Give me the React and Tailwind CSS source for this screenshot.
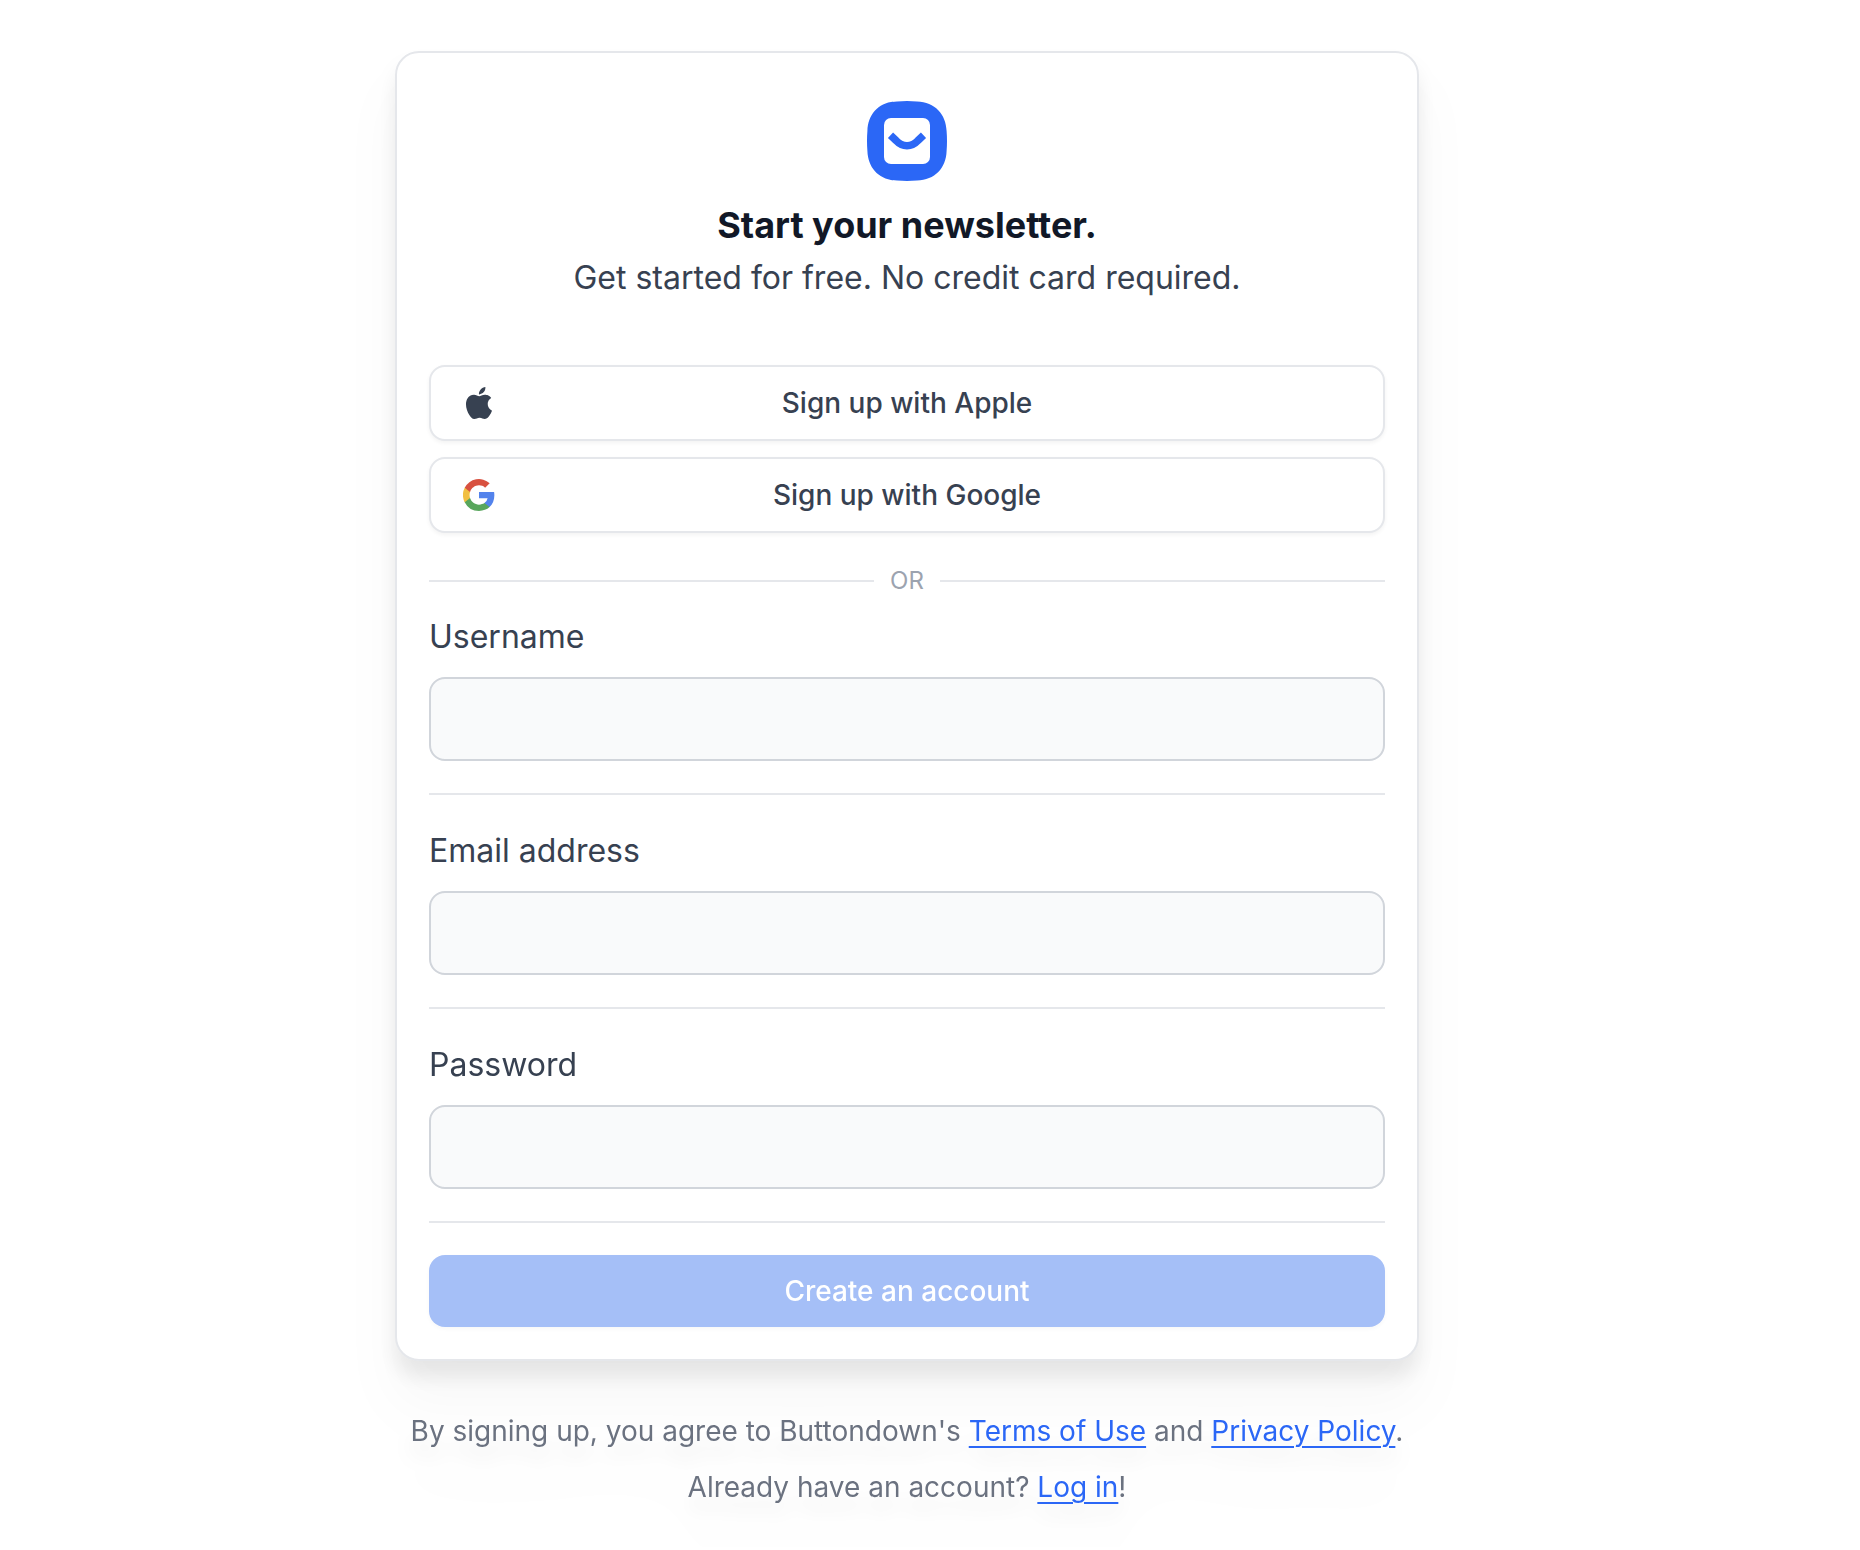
import React from "react";
import { SiApple } from "react-icons/si";

function Logo() {
  return (
    <svg viewBox="0 0 80 80" className="size-20" aria-label="Buttondown" role="img">
      <path
        fill="#2b67f6"
        d="M30 0.400Q40 -0.400 50 0.400C68 1 79 13 79.600 30Q80.400 40 79.600 50C79 67 68 79 50 79.600Q40 80.400 30 79.600C12 79 1 67 0.400 50Q-0.400 40 0.400 30C1 13 12 1 30 0.400Z"
      />
      <rect x="17" y="17" width="46" height="46" rx="7" fill="#fff" />
      <path
        d="M23.500 34.300L29 39.500C35.500 46.500 44.500 46.500 51 39.500L56.500 34.300"
        fill="none"
        stroke="#2b67f6"
        strokeWidth="7.500"
      />
    </svg>
  );
}

function GoogleIcon() {
  return (
    <svg viewBox="0 0 18 18" className="size-8" aria-hidden="true">
      <path fill="#5383ec" d="M17.640 9.200c0-.64-.06-1.250-.16-1.840H9v3.480h4.840a4.140 4.140 0 0 1-1.800 2.720v2.260h2.920c1.700-1.570 2.680-3.880 2.680-6.620z" />
      <path fill="#58a65c" d="M9 18c2.430 0 4.470-.8 5.960-2.180l-2.920-2.260c-.8.540-1.840.86-3.040.86-2.340 0-4.330-1.580-5.040-3.710H.96v2.330A9 9 0 0 0 9 18z" />
      <path fill="#f1bf42" d="M3.960 10.710a5.400 5.400 0 0 1 0-3.420V4.960H.96a9 9 0 0 0 0 8.080l3-2.330z" />
      <path fill="#d85140" d="M9 3.580c1.320 0 2.500.45 3.440 1.350l2.580-2.590A9 9 0 0 0 .96 4.960l3 2.330C4.670 5.160 6.660 3.580 9 3.580z" />
    </svg>
  );
}

function SocialButton({ icon, children }) {
  return (
    <button
      type="button"
      className="relative flex h-19 w-full items-center justify-center rounded-2xl border-2 border-[#e5e7eb] bg-white text-[28px] leading-10 font-medium text-[#374151] shadow-[0_2px_4px_rgb(0_0_0/0.05)]"
    >
      <span className="absolute left-8">{icon}</span>
      {children}
    </button>
  );
}

function Field({ id, label, type }) {
  return (
    <div className="border-b-2 border-[#e5e7eb] pb-8">
      <label htmlFor={id} className="block text-[32px] leading-12 text-[#374151]">
        {label}
      </label>
      <input
        id={id}
        name={id}
        type={type}
        className="mt-4 block h-21 w-full rounded-2xl border-2 border-[#d1d5db] bg-[#f9fafb] px-6 text-[32px] text-[#374151]"
      />
    </div>
  );
}

function TextLink({ children }) {
  return (
    <a href="#" className="text-[#2b67f6] underline decoration-2 underline-offset-[5px]">
      {children}
    </a>
  );
}

export default function App() {
  return (
    <main className="bg-white pt-[51px] pr-[46px] pb-10 font-['Inter',sans-serif]">
      <div className="drop-shadow-[0_40px_26px_rgb(0_0_0/0.03)]">
        <div className="drop-shadow-[0_16px_10px_rgb(0_0_0/0.08)]">
          <form className="mx-auto max-w-5xl rounded-3xl border-2 border-[#e5e7eb] bg-white px-8 pt-12 pb-8">
            <header className="flex flex-col items-center text-center">
              <Logo />
              <h1 className="mt-4 text-[36px] leading-14 font-bold text-[#111827]">
                Start your newsletter.
              </h1>
              <p className="text-[32px] leading-[50px] text-[#374151]">
                Get started for free. No credit card required.
              </p>
            </header>

            <div className="mt-[62px] flex flex-col gap-4">
              <SocialButton icon={<SiApple className="size-8" aria-hidden="true" />}>
                Sign up with Apple
              </SocialButton>
              <SocialButton icon={<GoogleIcon />}>Sign up with Google</SocialButton>
            </div>

            <div className="mt-8 mb-4 flex items-center gap-4 text-[24px] leading-8 text-[#9ca3af]">
              <span className="h-0.5 flex-1 bg-[#e5e7eb]" />
              OR
              <span className="h-0.5 flex-1 bg-[#e5e7eb]" />
            </div>

            <div className="flex flex-col gap-8">
              <Field id="username" label="Username" type="text" />
              <Field id="email" label="Email address" type="email" />
              <Field id="password" label="Password" type="password" />
              <button
                type="submit"
                className="h-18 w-full rounded-2xl bg-[#a5bff7] text-[28px] leading-10 font-medium text-white shadow-[0_2px_4px_rgb(0_0_0/0.03)]"
              >
                Create an account
              </button>
            </div>
          </form>

          <footer className="mt-[50px] flex flex-col gap-4 text-center text-[28px] leading-10 text-[#6b7280]">
            <p>
              By signing up, you agree to Buttondown's <TextLink>Terms of Use</TextLink> and{" "}
              <TextLink>Privacy Policy</TextLink>.
            </p>
            <p>
              Already have an account? <TextLink>Log in</TextLink>!
            </p>
          </footer>
        </div>
      </div>
    </main>
  );
}
